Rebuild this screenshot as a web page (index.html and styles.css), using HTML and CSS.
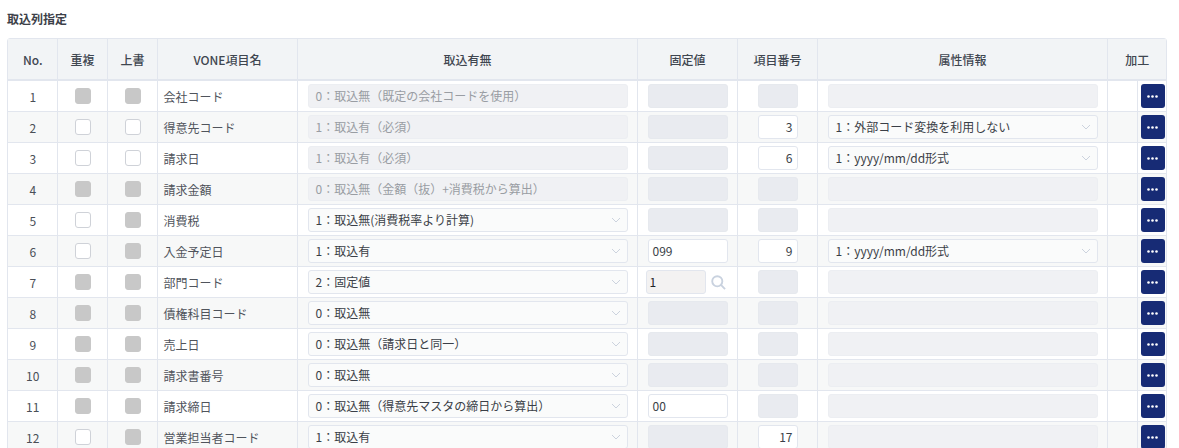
FILE: index.html
```html
<!DOCTYPE html>
<html lang="ja">
<head>
<meta charset="utf-8">
<title>取込列指定</title>
<link rel="stylesheet" href="styles.css">
</head>
<body>
<h2 class="title">取込列指定</h2>
<div class="wrap">
<table class="grid">
<colgroup><col class="c-no"><col class="c-chk"><col class="c-chk"><col class="c-name"><col class="c-take"><col class="c-fixed"><col class="c-num"><col class="c-attr"><col class="c-blank"><col class="c-btn"></colgroup>
<thead><tr><th>No.</th><th>重複</th><th>上書</th><th>VONE項目名</th><th>取込有無</th><th>固定値</th><th>項目番号</th><th>属性情報</th><th colspan="2">加工</th></tr></thead>
<tbody>
<tr><td class="no">1</td><td><i class="chk off"></i></td><td><i class="chk off"></i></td><td class="name">会社コード</td><td><div class="f dis lite">0：取込無（既定の会社コードを使用）</div></td><td><div class="f dis"></div></td><td><div class="f dis n"></div></td><td><div class="f dis lite"></div></td><td></td><td><button class="more"><svg viewBox="0 0 11 3"><circle cx="1.5" cy="1.5" r="1.3"/><circle cx="5.5" cy="1.5" r="1.3"/><circle cx="9.5" cy="1.5" r="1.3"/></svg></button></td></tr>
<tr><td class="no">2</td><td><i class="chk"></i></td><td><i class="chk"></i></td><td class="name">得意先コード</td><td><div class="f dis lite">1：取込有（必須）</div></td><td><div class="f dis"></div></td><td><div class="f n val">3</div></td><td><div class="f sel">1：外部コード変換を利用しない<svg class="ar" viewBox="0 0 10 6"><path d="M1 1l4 4 4-4"/></svg></div></td><td></td><td><button class="more"><svg viewBox="0 0 11 3"><circle cx="1.5" cy="1.5" r="1.3"/><circle cx="5.5" cy="1.5" r="1.3"/><circle cx="9.5" cy="1.5" r="1.3"/></svg></button></td></tr>
<tr><td class="no">3</td><td><i class="chk"></i></td><td><i class="chk"></i></td><td class="name">請求日</td><td><div class="f dis lite">1：取込有（必須）</div></td><td><div class="f dis"></div></td><td><div class="f n val">6</div></td><td><div class="f sel">1：yyyy/mm/dd形式<svg class="ar" viewBox="0 0 10 6"><path d="M1 1l4 4 4-4"/></svg></div></td><td></td><td><button class="more"><svg viewBox="0 0 11 3"><circle cx="1.5" cy="1.5" r="1.3"/><circle cx="5.5" cy="1.5" r="1.3"/><circle cx="9.5" cy="1.5" r="1.3"/></svg></button></td></tr>
<tr><td class="no">4</td><td><i class="chk off"></i></td><td><i class="chk off"></i></td><td class="name">請求金額</td><td><div class="f dis lite">0：取込無（金額（抜）+消費税から算出）</div></td><td><div class="f dis"></div></td><td><div class="f dis n"></div></td><td><div class="f dis lite"></div></td><td></td><td><button class="more"><svg viewBox="0 0 11 3"><circle cx="1.5" cy="1.5" r="1.3"/><circle cx="5.5" cy="1.5" r="1.3"/><circle cx="9.5" cy="1.5" r="1.3"/></svg></button></td></tr>
<tr><td class="no">5</td><td><i class="chk"></i></td><td><i class="chk off"></i></td><td class="name">消費税</td><td><div class="f sel">1：取込無(消費税率より計算)<svg class="ar" viewBox="0 0 10 6"><path d="M1 1l4 4 4-4"/></svg></div></td><td><div class="f dis"></div></td><td><div class="f dis n"></div></td><td><div class="f dis lite"></div></td><td></td><td><button class="more"><svg viewBox="0 0 11 3"><circle cx="1.5" cy="1.5" r="1.3"/><circle cx="5.5" cy="1.5" r="1.3"/><circle cx="9.5" cy="1.5" r="1.3"/></svg></button></td></tr>
<tr><td class="no">6</td><td><i class="chk"></i></td><td><i class="chk off"></i></td><td class="name">入金予定日</td><td><div class="f sel">1：取込有<svg class="ar" viewBox="0 0 10 6"><path d="M1 1l4 4 4-4"/></svg></div></td><td><div class="f txt">099</div></td><td><div class="f n val">9</div></td><td><div class="f sel">1：yyyy/mm/dd形式<svg class="ar" viewBox="0 0 10 6"><path d="M1 1l4 4 4-4"/></svg></div></td><td></td><td><button class="more"><svg viewBox="0 0 11 3"><circle cx="1.5" cy="1.5" r="1.3"/><circle cx="5.5" cy="1.5" r="1.3"/><circle cx="9.5" cy="1.5" r="1.3"/></svg></button></td></tr>
<tr><td class="no">7</td><td><i class="chk off"></i></td><td><i class="chk off"></i></td><td class="name">部門コード</td><td><div class="f sel">2：固定値<svg class="ar" viewBox="0 0 10 6"><path d="M1 1l4 4 4-4"/></svg></div></td><td><div class="lookup"><div class="f look">1</div><svg class="glass" viewBox="0 0 16 16"><circle cx="6.7" cy="6.7" r="5.4"/><path d="M10.6 10.6L15 15"/></svg></div></td><td><div class="f dis n"></div></td><td><div class="f dis lite"></div></td><td></td><td><button class="more"><svg viewBox="0 0 11 3"><circle cx="1.5" cy="1.5" r="1.3"/><circle cx="5.5" cy="1.5" r="1.3"/><circle cx="9.5" cy="1.5" r="1.3"/></svg></button></td></tr>
<tr><td class="no">8</td><td><i class="chk off"></i></td><td><i class="chk off"></i></td><td class="name">債権科目コード</td><td><div class="f sel">0：取込無<svg class="ar" viewBox="0 0 10 6"><path d="M1 1l4 4 4-4"/></svg></div></td><td><div class="f dis"></div></td><td><div class="f dis n"></div></td><td><div class="f dis lite"></div></td><td></td><td><button class="more"><svg viewBox="0 0 11 3"><circle cx="1.5" cy="1.5" r="1.3"/><circle cx="5.5" cy="1.5" r="1.3"/><circle cx="9.5" cy="1.5" r="1.3"/></svg></button></td></tr>
<tr><td class="no">9</td><td><i class="chk off"></i></td><td><i class="chk off"></i></td><td class="name">売上日</td><td><div class="f sel">0：取込無（請求日と同一）<svg class="ar" viewBox="0 0 10 6"><path d="M1 1l4 4 4-4"/></svg></div></td><td><div class="f dis"></div></td><td><div class="f dis n"></div></td><td><div class="f dis lite"></div></td><td></td><td><button class="more"><svg viewBox="0 0 11 3"><circle cx="1.5" cy="1.5" r="1.3"/><circle cx="5.5" cy="1.5" r="1.3"/><circle cx="9.5" cy="1.5" r="1.3"/></svg></button></td></tr>
<tr><td class="no">10</td><td><i class="chk off"></i></td><td><i class="chk off"></i></td><td class="name">請求書番号</td><td><div class="f sel">0：取込無<svg class="ar" viewBox="0 0 10 6"><path d="M1 1l4 4 4-4"/></svg></div></td><td><div class="f dis"></div></td><td><div class="f dis n"></div></td><td><div class="f dis lite"></div></td><td></td><td><button class="more"><svg viewBox="0 0 11 3"><circle cx="1.5" cy="1.5" r="1.3"/><circle cx="5.5" cy="1.5" r="1.3"/><circle cx="9.5" cy="1.5" r="1.3"/></svg></button></td></tr>
<tr><td class="no">11</td><td><i class="chk off"></i></td><td><i class="chk off"></i></td><td class="name">請求締日</td><td><div class="f sel">0：取込無（得意先マスタの締日から算出）<svg class="ar" viewBox="0 0 10 6"><path d="M1 1l4 4 4-4"/></svg></div></td><td><div class="f txt">00</div></td><td><div class="f dis n"></div></td><td><div class="f dis lite"></div></td><td></td><td><button class="more"><svg viewBox="0 0 11 3"><circle cx="1.5" cy="1.5" r="1.3"/><circle cx="5.5" cy="1.5" r="1.3"/><circle cx="9.5" cy="1.5" r="1.3"/></svg></button></td></tr>
<tr><td class="no">12</td><td><i class="chk"></i></td><td><i class="chk off"></i></td><td class="name">営業担当者コード</td><td><div class="f sel">1：取込有<svg class="ar" viewBox="0 0 10 6"><path d="M1 1l4 4 4-4"/></svg></div></td><td><div class="f dis"></div></td><td><div class="f n val">17</div></td><td><div class="f dis lite"></div></td><td></td><td><button class="more"><svg viewBox="0 0 11 3"><circle cx="1.5" cy="1.5" r="1.3"/><circle cx="5.5" cy="1.5" r="1.3"/><circle cx="9.5" cy="1.5" r="1.3"/></svg></button></td></tr>
</tbody>
</table>
</div>
</body>
</html>
```
FILE: styles.css
```css
html, body { margin: 0; padding: 0; background: #fff; overflow: hidden; height: 448px; }
body { font-family: "Noto Sans CJK JP", "Noto Sans", sans-serif; font-size: 12px; color: #4a4f57; padding: 0 7px; }
.title { margin: 0; padding-top: 10px; height: 38px; box-sizing: border-box; font-size: 12px; line-height: 18px; font-weight: 700; color: #3c4048; }
.wrap { width: 1160px; border: 1px solid #e2e6ee; border-radius: 3px 3px 0 0; box-sizing: border-box; }
.grid { border-collapse: collapse; table-layout: fixed; width: 1158px; }
.c-no { width: 49px; }
.c-chk { width: 50px; }
.c-name { width: 140px; }
.c-take { width: 340px; }
.c-fixed { width: 100px; }
.c-num { width: 80px; }
.c-attr { width: 290px; }
.c-blank { width: 30px; }
.c-btn { width: 29px; }
th { height: 40px; padding: 0 0 0 1px; background: #f2f4f6; border-right: 1px solid #e2e6ee; border-bottom: 2px solid #e2e6ee; font-size: 12px; font-weight: 500; color: #3f4650; text-align: center; }
td { height: 30px; padding: 0 0 0 1px; border-right: 1px solid #e2e6ee; border-bottom: 1px solid #e2e6ee; text-align: center; vertical-align: middle; }
th:last-child, td:last-child { border-right: 0; }
tbody tr:nth-child(even) td { background: #f7f8f8; }
.no { color: #4a4f57; }
td.name { text-align: left; padding-left: 6px; color: #50545c; }
.chk { display: block; width: 16px; height: 16px; margin: 0 auto; box-sizing: border-box; border: 1px solid #cfd2d8; border-radius: 3px; background: #fff; }
.chk.off { background: #c8c8c8; border-color: #c8c8c8; }
.f { position: relative; box-sizing: border-box; height: 24px; margin: 0 9px; padding: 0 7px; line-height: 22px; text-align: left; border: 1px solid #e2e6ee; border-radius: 3px; background: #fff; color: #3a3f47; }
.dis { background: #e9ebf0; border-color: #e6e9ee; color: #999da3; }
.lite { background: #f0f1f4; border-color: #eceef2; }
.sel { background: #fafbfb; }
.n { width: 40px; margin: 0 auto; }
.val { text-align: right; padding: 0 4px; }
.txt { padding: 0 4px; }
.lookup { display: flex; align-items: center; margin-left: 7px; }
.look { width: 60px; margin: 0; padding: 0 3px; background: #f3f2f2; color: #1f2329; }
.glass { width: 15px; height: 15px; margin-left: 5px; fill: none; stroke: #c9d2df; stroke-width: 2; }
.ar { position: absolute; right: 6px; top: 8px; width: 10px; height: 6px; fill: none; stroke: #ccd3de; stroke-width: 1; }
.more { display: flex; align-items: center; justify-content: center; width: 24px; height: 24px; margin: 0 0 0 2px; padding: 0; border: 0; border-radius: 3px; background: #172b75; }
.more svg { display: block; width: 11px; height: 3px; fill: #fff; }
```
